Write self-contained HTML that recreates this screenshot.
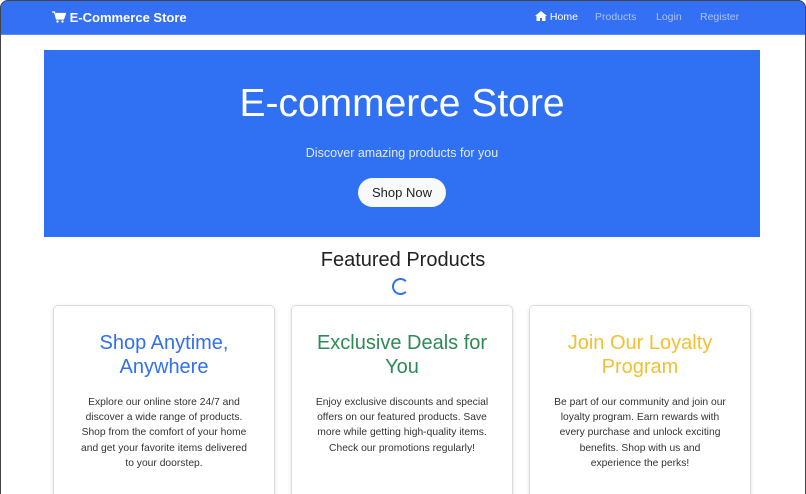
<!DOCTYPE html>
<html><head><style>
*{box-sizing:border-box;margin:0;padding:0}
html,body{width:806px;height:494px;overflow:hidden}
body{background:#fff;font-family:"Liberation Sans",sans-serif;position:relative}
.frame{position:absolute;inset:0;border:1px solid #444;border-radius:8px 8px 0 0;pointer-events:none;border-bottom:none}
.nav{position:absolute;left:0;top:0;width:806px;height:35px;background:#3370f3;border-bottom:1px solid #5a8cf5;border-radius:8px 8px 0 0}
.brand{position:absolute;left:52px;top:10px;color:#fff;font-weight:bold;font-size:13px}
.links{position:absolute;top:11px;font-size:10.5px;color:#a9c2f8}
.hero{position:absolute;left:44px;top:50px;width:716px;height:187px;background:#3070f2;text-align:center;color:#fff}
.hero h1{font-weight:300;font-size:39px;position:absolute;top:32px;width:100%}
.hero p{position:absolute;top:96px;width:100%;font-size:12.5px;color:#e3ebfd}
.btn{position:absolute;left:314px;top:128px;width:88px;height:29px;background:#f8f9fa;border-radius:15px;color:#222;font-size:13px;line-height:29px}
h2{position:absolute;top:249px;width:806px;text-align:center;font-weight:normal;font-size:20px;color:#222}
.spin{position:absolute;left:392px;top:278px;width:17px;height:17px;border:2px solid #3070f2;border-right-color:transparent;border-radius:50%}
.card{position:absolute;top:305px;width:222px;height:200px;border:1px solid #ddd;border-radius:5px;box-shadow:0 1px 4px rgba(0,0,0,.12);text-align:center}
.card h3{font-weight:normal;font-size:20px;line-height:24px;margin:25px 14px 0}
.card p{font-size:10.3px;line-height:15.2px;color:#333;margin:16px 22px 0}
</style></head><body>
<div class="nav">
<div class="brand"><svg width="14" height="12" viewBox="0 0 14 12" style="vertical-align:-1px"><path d="M0 1h2.5l2 7h7l2-5.5H4" fill="#fff" stroke="#fff" stroke-width="1.2"/><circle cx="5.5" cy="10.5" r="1.2" fill="#fff"/><circle cx="10.5" cy="10.5" r="1.2" fill="#fff"/></svg> E-Commerce Store</div>
<div class="links" style="left:535px;color:#fff"><svg width="12" height="10" viewBox="0 0 12 10" style="vertical-align:-1px"><path d="M6 0L0 5h1.5v5h3.5V7h2v3h3.5V5H12z" fill="#fff"/></svg> Home</div>
<div class="links" style="left:595px">Products</div>
<div class="links" style="left:656px">Login</div>
<div class="links" style="left:700px">Register</div>
</div>
<div class="hero"><h1>E-commerce Store</h1><p>Discover amazing products for you</p><div class="btn">Shop Now</div></div>
<h2>Featured Products</h2>
<div class="spin"></div>
<div class="card" style="left:53px"><h3 style="color:#2f6ff0">Shop Anytime, Anywhere</h3><p>Explore our online store 24/7 and discover a wide range of products. Shop from the comfort of your home and get your favorite items delivered to your doorstep.</p></div>
<div class="card" style="left:291px"><h3 style="color:#2e8a55">Exclusive Deals for You</h3><p>Enjoy exclusive discounts and special offers on our featured products. Save more while getting high-quality items. Check our promotions regularly!</p></div>
<div class="card" style="left:529px"><h3 style="color:#f4c02f">Join Our Loyalty Program</h3><p>Be part of our community and join our loyalty program. Earn rewards with every purchase and unlock exciting benefits. Shop with us and<br>experience the perks!</p></div>
<div class="frame"></div>
</body></html>
